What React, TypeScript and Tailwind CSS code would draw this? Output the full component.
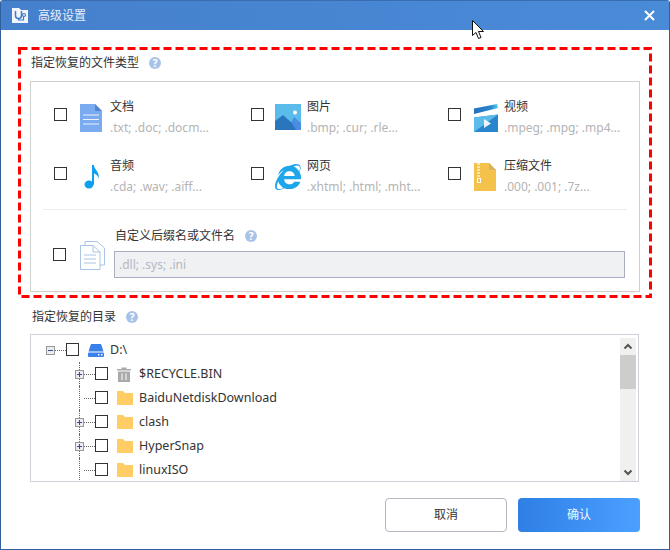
import { FaInternetExplorer } from 'react-icons/fa';

const FONT = "font-['Noto_Sans','Noto_Sans_CJK_SC',sans-serif]";

function Check() {
  return <div className="w-[13px] h-[13px] shrink-0 border border-[#333] bg-white" />;
}

function Help() {
  return (
    <span className="flex w-[12px] h-[12px] items-center justify-center rounded-full bg-[#a9c3e8] text-[10px] leading-none font-bold text-white">
      ?
    </span>
  );
}

function DocIcon() {
  return (
    <svg width="22" height="28" viewBox="0 0 22 28" className="ml-[2px]">
      <path d="M0 0H15L22 7V28H0Z" fill="#7aaaf0" />
      <path d="M15 0L22 7H15Z" fill="#5585d0" />
      <path d="M3 11H19M3 15.5H19M3 20H19" stroke="#fff" strokeWidth="1" fill="none" opacity="0.85" />
    </svg>
  );
}

function ImageIcon() {
  return (
    <svg width="26" height="27" viewBox="0 0 26 27">
      <rect width="26" height="26" fill="#5bbcec" />
      <circle cx="20" cy="8.500" r="2" fill="#fff" />
      <path d="M12 26L19 13L26 19V26Z" fill="#4a8de0" />
      <path d="M0 17L8 11L17 19L21 26H0Z" fill="#2a76bd" />
    </svg>
  );
}

function VideoIcon() {
  return (
    <svg width="24" height="28" viewBox="0 0 24 28" className="ml-[2px]">
      <defs>
        <linearGradient id="clap" x1="0" x2="1" y1="0" y2="0">
          <stop offset="0" stopColor="#2270c0" />
          <stop offset="0.7" stopColor="#2a86cc" />
          <stop offset="1" stopColor="#4fd0ea" />
        </linearGradient>
      </defs>
      <path d="M0 4.500L23 0L24 4L0 10Z" fill="url(#clap)" />
      <path d="M0 13.500L24 10.500V28H0Z" fill="#2a86cc" />
      <path d="M0 13.500L24 10.500L0 28Z" fill="#5bbcec" />
      <path d="M10 15L17 19.500L10 24Z" fill="#fff" opacity="0.9" />
    </svg>
  );
}

function MusicIcon() {
  return (
    <svg width="16" height="25" viewBox="0 0 16 25" className="ml-[6px]">
      <ellipse cx="5" cy="20.500" rx="4.500" ry="4" fill="#0ea0ee" />
      <path d="M8 1H10C10 6 16 7 14.500 15C14 11 11.500 10 10 9.500V20.500H8Z" fill="#0ea0ee" />
    </svg>
  );
}

function ZipIcon() {
  return (
    <svg width="22" height="28" viewBox="0 0 22 28" className="ml-[2px]">
      <path d="M0 0H15L22 7V28H0Z" fill="#f4c24a" />
      <path d="M15 0L22 7H15Z" fill="#d8b264" />
      <path
        d="M3 0h3v2h-3zM3 3h3v2h-3zM3 6h3v2h-3zM3 9h3v2h-3zM3 12h3v2h-3z"
        fill="#fbe6ae"
      />
      <rect x="3.500" y="15.500" width="3" height="4" fill="none" stroke="#fff" strokeWidth="1" />
    </svg>
  );
}

function FilesIcon() {
  return (
    <svg width="25" height="29" viewBox="0 0 25 29" fill="none" stroke="#a9c4e4" strokeWidth="1">
      <path d="M5 4V0.500H17L24.500 7V24H20" />
      <path d="M0.500 4.500H13L20 11V28.500H0.500Z" fill="#fff" />
      <path d="M13 4.500V11H20" />
      <path d="M4 14H16M4 18H16M4 22H16" />
    </svg>
  );
}

function DriveIcon() {
  return (
    <svg width="16" height="13" viewBox="0 0 16 13">
      <path d="M3 0H13L15.500 7.500H0.500Z" fill="#3a80ea" />
      <rect x="0" y="8.500" width="16" height="4.500" rx="1" fill="#3a80ea" />
      <rect x="10" y="10" width="1.500" height="1.500" fill="#fff" />
      <rect x="13" y="10" width="1.500" height="1.500" fill="#fff" />
    </svg>
  );
}

function TrashIcon() {
  return (
    <svg width="14" height="15" viewBox="0 0 14 15">
      <path d="M0 2H4.500V0.500H9.500V2H14V3.500H0Z" fill="#aaa" />
      <path d="M1 4.500H13V15H1Z" fill="#aaa" />
      <path d="M5 6.500V13M9 6.500V13" stroke="#e4e4e4" strokeWidth="1.500" />
    </svg>
  );
}

function FolderIcon() {
  return (
    <svg width="16" height="14" viewBox="0 0 16 14">
      <path d="M0 0H6L8 2H16V14H0Z" fill="#ffcc66" />
    </svg>
  );
}

function Expander({ open }: { open?: boolean }) {
  return (
    <div className="relative flex h-[9px] w-[9px] shrink-0 items-center justify-center border border-[#9a9a9a] bg-[#ececec]">
      <div className="h-px w-[5px] bg-[#2f4f8f]" />
      {!open && <div className="absolute h-[5px] w-px bg-[#2f4f8f]" />}
    </div>
  );
}

function FileType({
  icon,
  title,
  sub,
}: {
  icon: React.ReactNode;
  title: string;
  sub: string;
}) {
  return (
    <div className="flex h-[59px] items-center">
      <Check />
      <div className="flex items-center pt-[6px]">
        <div className="ml-[11px] w-[32px] shrink-0">{icon}</div>
        <div className="flex flex-col whitespace-nowrap">
          <span className="text-[12px] leading-[18px] text-[#333]">{title}</span>
          <span className="mt-[3px] text-[12px] leading-[18px] text-[#b4b4b4]">{sub}</span>
        </div>
      </div>
    </div>
  );
}

function TreeRow({
  icon,
  label,
  expander,
}: {
  icon: React.ReactNode;
  label: string;
  expander?: boolean;
}) {
  return (
    <div className="relative flex h-[24px] items-center pl-[44px]">
      <div className="absolute left-[48px] top-0 h-full border-l border-dotted border-[#666]" />
      <div className="flex w-[9px] shrink-0 justify-start">
        {expander && <div className="relative z-10"><Expander /></div>}
      </div>
      <div className="h-px w-[11px] border-t border-dotted border-[#666]" />
      <div className="mt-[-1px]"><Check /></div>
      <div className="ml-[9px] w-[22px] shrink-0">{icon}</div>
      <span className="text-[12.500px] leading-[18px] text-[#333]">{label}</span>
    </div>
  );
}

export default function App() {
  return (
    <div className={`relative flex h-[550px] w-[670px] flex-col overflow-hidden rounded-t-[3px] border-x border-b border-[#2f5f9f] bg-white ${FONT}`}>
      <header className="flex h-[30px] shrink-0 items-center bg-gradient-to-r from-[#4580cc] to-[#4a8bd8] border-t border-[#3a6cb0] pl-[11px] pr-[14px]">
        <svg width="16" height="15" viewBox="0 0 16 15">
          <path d="M0 0H7L9 2H16V15H0Z" fill="#f2f6fc" />
          <path d="M3.500 3V7.500A3 3 0 0 0 9.500 7.500V3" fill="none" stroke="#3d7cc8" strokeWidth="1.500" />
          <circle cx="12" cy="7" r="1.500" fill="none" stroke="#3d7cc8" strokeWidth="1.200" />
          <path d="M6.500 10.500V12H11.500V8.500" fill="none" stroke="#3d7cc8" strokeWidth="1.200" />
        </svg>
        <span className="ml-[10px] text-[12px] leading-none text-[#e6eef9]">高级设置</span>
        <svg width="11" height="11" viewBox="0 0 11 11" className="ml-auto">
          <path d="M1 1L10 10M10 1L1 10" stroke="#fff" strokeWidth="2" />
        </svg>
      </header>

      <section className="relative ml-[17px] mt-[17px] h-[251px] w-[634px] shrink-0 px-[12px] pt-[34px]">
        <svg width="634" height="251" className="absolute inset-0">
          <rect x="1.500" y="1.500" width="631" height="248" fill="none" stroke="#ff0000" strokeWidth="3" strokeDasharray="8 4" />
        </svg>
        <div className="absolute left-[13px] top-[7px] flex h-[18px] items-center">
          <span className="text-[12px] leading-[18px] text-[#333]">指定恢复的文件类型</span>
          <span className="ml-[10px]"><Help /></span>
        </div>
        <div className="relative h-[211px] w-[610px] border border-[#cfcfcf] pt-[3px]">
          <div className="grid grid-cols-[197px_197px_170px] pl-[23px]">
            <FileType icon={<DocIcon />} title="文档" sub=".txt; .doc; .docm..." />
            <FileType icon={<ImageIcon />} title="图片" sub=".bmp; .cur; .rle..." />
            <FileType icon={<VideoIcon />} title="视频" sub=".mpeg; .mpg; .mp4..." />
            <FileType icon={<MusicIcon />} title="音频" sub=".cda; .wav; .aiff..." />
            <FileType icon={<FaInternetExplorer className="text-[26px] text-[#1ea6ea]" />} title="网页" sub=".xhtml; .html; .mht..." />
            <FileType icon={<ZipIcon />} title="压缩文件" sub=".000; .001; .7z..." />
          </div>
          <div className="mx-[12px] mt-[6px] h-px bg-[#ececec]" />
          <div className="flex items-start pl-[22px] pr-[14px] pt-[17px]">
            <div className="mt-[21px]"><Check /></div>
            <div className="ml-[14px] mt-[14px] w-[34px] shrink-0"><FilesIcon /></div>
            <div className="flex flex-1 flex-col">
              <div className="flex h-[18px] items-center pl-[1px]">
                <span className="text-[12px] leading-[18px] text-[#333]">自定义后缀名或文件名</span>
                <span className="ml-[10px]"><Help /></span>
              </div>
              <div className="mt-[6px] flex h-[27px] items-center border border-[#a9afc0] bg-[#f0f1f3] px-[4px] text-[12px] text-[#b4b8c0]">
                .dll; .sys; .ini
              </div>
            </div>
          </div>
        </div>
      </section>

      <div className="ml-[31px] mt-[10px] flex h-[18px] items-center">
        <span className="text-[12px] leading-[18px] text-[#333]">指定恢复的目录</span>
        <span className="ml-[10px]"><Help /></span>
      </div>

      <div className="relative ml-[29px] mt-[8px] h-[148px] w-[609px] overflow-hidden border border-[#cfd2d8] pt-[3px]">
        <div className="flex h-[24px] items-center pl-[15px]">
          <Expander open />
          <div className="h-px w-[11px] border-t border-dotted border-[#666]" />
          <div className="mt-[-1px]"><Check /></div>
          <div className="ml-[9px] w-[22px] shrink-0"><DriveIcon /></div>
          <span className="text-[12.500px] leading-[18px] text-[#333]">D:\</span>
        </div>
        <TreeRow expander icon={<TrashIcon />} label="$RECYCLE.BIN" />
        <TreeRow icon={<FolderIcon />} label="BaiduNetdiskDownload" />
        <TreeRow expander icon={<FolderIcon />} label="clash" />
        <TreeRow expander icon={<FolderIcon />} label="HyperSnap" />
        <TreeRow icon={<FolderIcon />} label="linuxISO" />
        <div className="absolute bottom-0 right-[2px] top-[3px] flex w-[16px] flex-col items-center bg-[#f0f0f0]">
          <svg width="16" height="17" viewBox="0 0 16 17">
            <path d="M4.500 10.500L8 7L11.500 10.500" fill="none" stroke="#555" strokeWidth="2" />
          </svg>
          <div className="h-[34px] w-full bg-[#cdcdcd]" />
          <svg width="16" height="17" viewBox="0 0 16 17" className="mt-auto">
            <path d="M4.500 6.500L8 10L11.500 6.500" fill="none" stroke="#555" strokeWidth="2" />
          </svg>
        </div>
      </div>

      <div className="ml-[384px] mt-[16px] flex gap-[11px]">
        <button className="h-[34px] w-[122px] rounded-[4px] border border-[#b4b8c0] bg-white text-[12px] text-[#333]">取消</button>
        <button className="h-[34px] w-[122px] rounded-[4px] bg-gradient-to-r from-[#2f7fe6] to-[#4ba0ff] text-[12px] text-[#eef5ff]">确认</button>
      </div>

      <svg width="13" height="20" viewBox="0 0 13 20" className="absolute left-[471px] top-[20px]">
        <path d="M0.500 0.500V15.500L4 12.500L6.500 18.500L9 17.500L6.500 11.500H11.500Z" fill="#fff" stroke="#111" strokeWidth="1" />
      </svg>
    </div>
  );
}
